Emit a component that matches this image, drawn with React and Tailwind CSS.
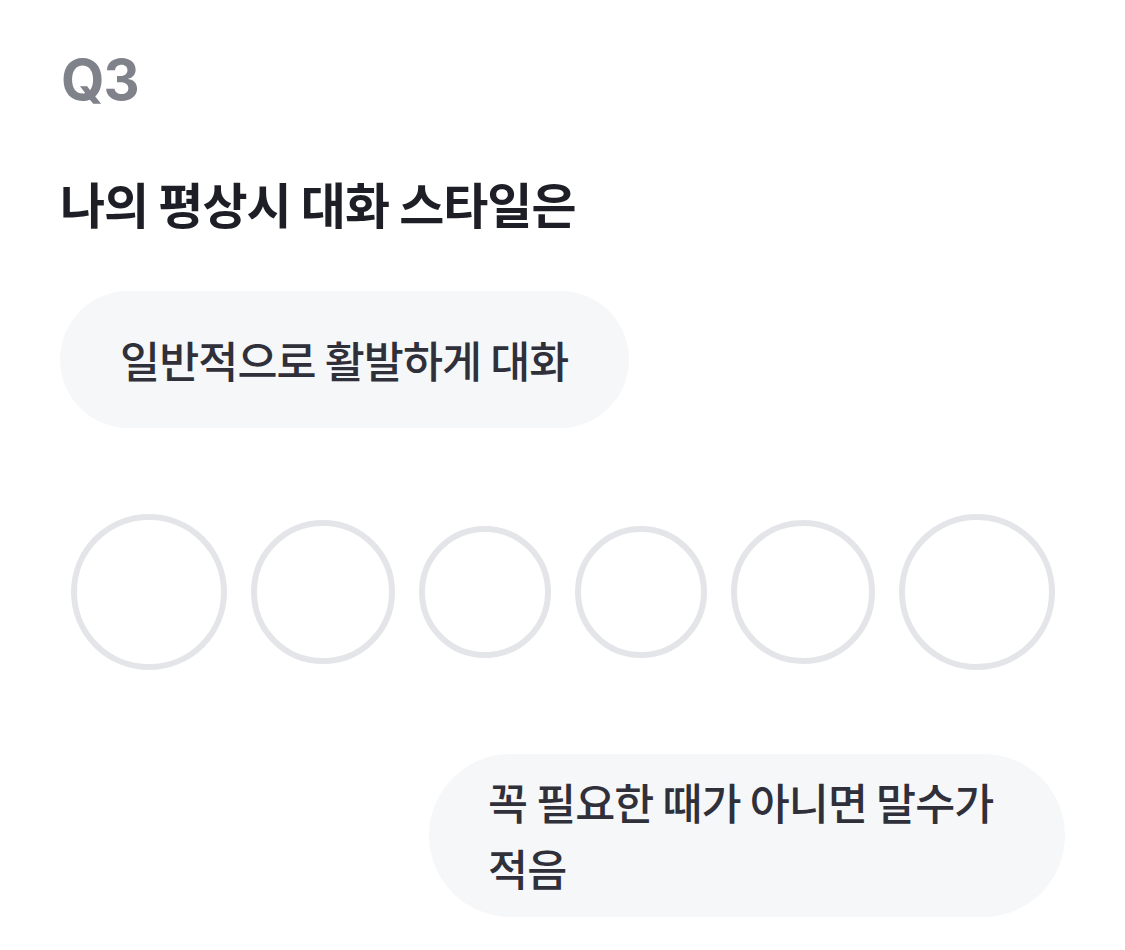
const circles = [156, 144, 132, 132, 144, 156]

export default function App() {
  return (
    <div className="min-h-[950px] bg-white px-[60px] pt-[52px]" style={{ fontFamily: '"Noto Sans CJK KR", "Noto Sans", sans-serif' }}>
      <div className="pl-[1px] text-[56px] font-bold leading-none tracking-[-0.02em] text-[#7f828b]" style={{ fontFamily: 'Inter, "Noto Sans CJK KR", sans-serif' }}>
        Q3
      </div>

      <h1 className="mt-[70px] text-[49px] font-bold leading-none tracking-[-0.02em] text-[#1e1e26]">
        나의 평상시 대화 스타일은
      </h1>

      <div className="mt-[64px] inline-flex h-[137px] items-center rounded-full bg-[#f6f7f9] px-[60px]">
        <span className="text-[43.5px] font-medium leading-none tracking-[-0.02em] text-[#30303a]">
          일반적으로 활발하게 대화
        </span>
      </div>

      <div className="mt-[86px] flex items-center justify-center gap-[24px]">
        {circles.map((d, i) => (
          <button
            key={i}
            className="shrink-0 rounded-full border-[6px] border-[#e4e5e9] bg-white"
            style={{ width: d, height: d }}
          />
        ))}
      </div>

      <div className="mt-[84px] flex justify-end">
        <div className="w-[636px] rounded-full bg-[#f6f7f9] px-[59px] pb-[16px] pt-[15px] text-[43.5px] font-medium leading-[66px] tracking-[-0.02em] text-[#30303a]">
          꼭 필요한 때가 아니면 말수가 적음
        </div>
      </div>
    </div>
  )
}
